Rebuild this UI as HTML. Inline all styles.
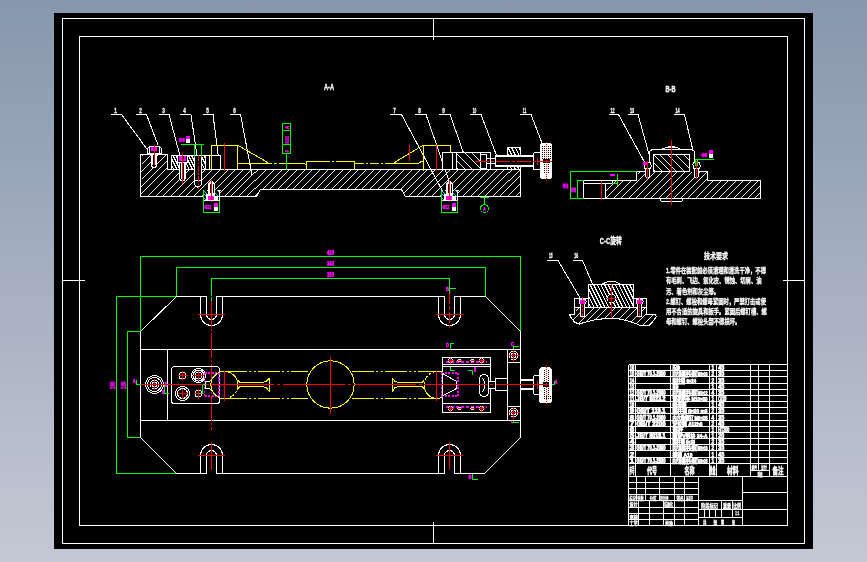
<!DOCTYPE html>
<html lang="zh"><head><meta charset="utf-8"><title>夹具装配图</title>
<style>html,body{margin:0;padding:0;overflow:hidden;background:#c4c8d4}body{width:867px;height:562px;background:linear-gradient(180deg,#8797ad 0%,#c4c8d4 100%)}svg{display:block;position:absolute;left:0;top:0;will-change:transform}text{font-family:"Liberation Sans","Noto Sans CJK SC",sans-serif;stroke:none}</style></head><body>
<svg width="867" height="562" viewBox="0 0 867 562" shape-rendering="crispEdges" fill="none" stroke-width="1">
<defs><pattern id="kn" width="2" height="2" patternUnits="userSpaceOnUse"><rect x="0" y="0" width="2" height="2" fill="#fff"/><rect x="0" y="0" width="1" height="1" fill="#000"/></pattern></defs>
<rect x="54" y="13" width="759" height="536" fill="#000"/>
<rect x="62.5" y="18.5" width="742" height="525" stroke="#fff" fill="none"/>
<rect x="79.5" y="36.5" width="708" height="489" stroke="#fff" fill="none"/>
<line x1="433.5" y1="18" x2="433.5" y2="40" stroke="#fff"/>
<line x1="433.5" y1="522" x2="433.5" y2="544" stroke="#fff"/>
<line x1="62" y1="280.5" x2="85" y2="280.5" stroke="#fff"/>
<line x1="783" y1="280.5" x2="805" y2="280.5" stroke="#fff"/>
<g id="secAA">
<text transform="translate(329 90) scale(0.6 1)" font-size="9.5" fill="#fff" text-anchor="middle" font-weight="bold" style="stroke:#fff;stroke-width:0.35">A-A</text>
<path d="M142.41 154.5L140.5 156.41M150.09 154.5L140.5 164.09M157.77 154.5L140.5 171.77M165.45 154.5L140.5 179.45M167.5 160.13L140.5 187.13M167.5 167.81L140.5 194.81M173.49 169.5L146.49 196.5M181.17 169.5L154.17 196.5M188.85 169.5L161.85 196.5M196.53 169.5L169.53 196.5M204.21 169.5L177.21 196.5M211.89 169.5L184.89 196.5M219.57 169.5L192.57 196.5M227.25 169.5L200.25 196.5M234.93 169.5L207.93 196.5M242.61 169.5L215.61 196.5M250.29 169.5L223.29 196.5M257.97 169.5L230.97 196.5M265.65 169.5L238.65 196.5M273.33 169.5L246.33 196.5M281.01 169.5L261.01 189.5M259.82 190.69L254.01 196.5M288.69 169.5L268.69 189.5M296.37 169.5L276.37 189.5M304.05 169.5L284.05 189.5M311.73 169.5L291.73 189.5M319.41 169.5L299.41 189.5M327.09 169.5L307.09 189.5M334.77 169.5L314.77 189.5M342.45 169.5L322.45 189.5M350.13 169.5L330.13 189.5M357.81 169.5L337.81 189.5M365.49 169.5L345.49 189.5M373.17 169.5L353.17 189.5M380.85 169.5L360.85 189.5M388.53 169.5L368.53 189.5M396.21 169.5L376.21 189.5M403.89 169.5L383.89 189.5M411.57 169.5L391.57 189.5M419.25 169.5L399.25 189.5M426.93 169.5L403.47 192.96M434.61 169.5L407.61 196.5M442.29 169.5L415.29 196.5M449.97 169.5L422.97 196.5M457.65 169.5L430.65 196.5M465.33 169.5L438.33 196.5M473.01 169.5L446.01 196.5M480.69 169.5L453.69 196.5M488.37 169.5L461.37 196.5M496.05 169.5L469.05 196.5M503.73 169.5L476.73 196.5M511.41 169.5L484.41 196.5M519.09 169.5L492.09 196.5M520.5 175.77L499.77 196.5M520.5 183.45L507.45 196.5M520.5 191.13L515.13 196.5" stroke="#fff" stroke-width="0.92"/>
<polygon points="140.5,154.5 167.5,154.5 167.5,169.5 520.5,169.5 520.5,196.5 405.5,196.5 401.5,189.5 260.5,189.5 256.5,196.5 140.5,196.5" stroke="#fff" fill="none"/>
<polyline points="111,114.5 121.5,114.5 148,150.5" stroke="#fff" fill="none"/>
<text transform="translate(115.5 112.5) scale(0.6 1)" font-size="7.6" fill="#fff" text-anchor="middle" font-weight="bold" style="stroke:#fff;stroke-width:0.35">1</text>
<polyline points="136,114.5 146.5,114.5 158,145" stroke="#fff" fill="none"/>
<text transform="translate(140.5 112.5) scale(0.6 1)" font-size="7.6" fill="#fff" text-anchor="middle" font-weight="bold" style="stroke:#fff;stroke-width:0.35">2</text>
<polyline points="159,114.5 169,114.5 181,159.5" stroke="#fff" fill="none"/>
<text transform="translate(163.5 112.5) scale(0.6 1)" font-size="7.6" fill="#fff" text-anchor="middle" font-weight="bold" style="stroke:#fff;stroke-width:0.35">3</text>
<polyline points="180,114.5 191,114.5 199,170" stroke="#fff" fill="none"/>
<text transform="translate(184.5 112.5) scale(0.6 1)" font-size="7.6" fill="#fff" text-anchor="middle" font-weight="bold" style="stroke:#fff;stroke-width:0.35">4</text>
<polyline points="203,114.5 213,114.5 219,162" stroke="#fff" fill="none"/>
<text transform="translate(207.5 112.5) scale(0.6 1)" font-size="7.6" fill="#fff" text-anchor="middle" font-weight="bold" style="stroke:#fff;stroke-width:0.35">5</text>
<polyline points="230,114.5 240.5,114.5 252,175" stroke="#fff" fill="none"/>
<text transform="translate(234.5 112.5) scale(0.6 1)" font-size="7.6" fill="#fff" text-anchor="middle" font-weight="bold" style="stroke:#fff;stroke-width:0.35">6</text>
<polyline points="390,114.5 401.5,114.5 443.5,193" stroke="#fff" fill="none"/>
<text transform="translate(394.5 112.5) scale(0.6 1)" font-size="7.6" fill="#fff" text-anchor="middle" font-weight="bold" style="stroke:#fff;stroke-width:0.35">7</text>
<polyline points="415,114.5 426,114.5 449.5,182" stroke="#fff" fill="none"/>
<text transform="translate(419.5 112.5) scale(0.6 1)" font-size="7.6" fill="#fff" text-anchor="middle" font-weight="bold" style="stroke:#fff;stroke-width:0.35">8</text>
<polyline points="439,114.5 450,114.5 465.5,158.5" stroke="#fff" fill="none"/>
<text transform="translate(443.5 112.5) scale(0.6 1)" font-size="7.6" fill="#fff" text-anchor="middle" font-weight="bold" style="stroke:#fff;stroke-width:0.35">9</text>
<polyline points="470,114.5 481,114.5 498,159.5" stroke="#fff" fill="none"/>
<text transform="translate(474.5 112.5) scale(0.42 1)" font-size="7.6" fill="#fff" text-anchor="middle" font-weight="bold" style="stroke:#fff;stroke-width:0.35">10</text>
<polyline points="520,114.5 531,114.5 542,143" stroke="#fff" fill="none"/>
<text transform="translate(524.5 112.5) scale(0.42 1)" font-size="7.6" fill="#fff" text-anchor="middle" font-weight="bold" style="stroke:#fff;stroke-width:0.35">11</text>
<polyline points="151.5,154.5 151.5,165.5 152.5,167.5 155.5,167.5 156.5,165.5 156.5,154.5" stroke="#fff" fill="#000"/>
<polygon points="147.5,153.5 147.5,148.5 149.5,146.5 159.5,146.5 161.5,148.5 161.5,153.5" stroke="#fff" fill="#000"/>
<line x1="149.5" y1="146.5" x2="149.5" y2="153.5" stroke="#fff"/>
<line x1="159.5" y1="146.5" x2="159.5" y2="153.5" stroke="#fff"/>
<rect x="149.5" y="153.5" width="10" height="1" stroke="#fff" fill="#000"/>
<line x1="152.5" y1="154.5" x2="152.5" y2="165" stroke="#fff"/>
<line x1="155.5" y1="154.5" x2="155.5" y2="165" stroke="#fff"/>
<rect x="151.5" y="147.5" width="5" height="3" stroke="#f0f" fill="#f0f"/>
<line x1="154.5" y1="145" x2="154.5" y2="164.5" stroke="#f00"/>
<path d="M171.5 164.9L173.8 169.5M171.5 158.7L176.9 169.5M173 155.5L180 169.5M176.1 155.5L183.1 169.5M179.2 155.5L186.2 169.5M182.3 155.5L189.3 169.5M185.4 155.5L192.4 169.5M188.5 155.5L195.5 169.5M191.6 155.5L198.6 169.5M194.7 155.5L201.7 169.5M197.8 155.5L204.8 169.5M200.9 155.5L205.5 164.7M204 155.5L205.5 158.5" stroke="#fff" stroke-width="1.16"/>
<rect x="171.5" y="155.5" width="34" height="14" stroke="#fff" fill="none"/>
<polygon points="177.5,155.5 177.5,162.5 179.5,162.5 179.5,178.5 181,180.5 184,180.5 185.5,178.5 185.5,162.5 187.5,162.5 187.5,155.5" stroke="#fff" fill="#000"/>
<line x1="181" y1="162.5" x2="181" y2="178.5" stroke="#fff"/>
<line x1="184" y1="162.5" x2="184" y2="178.5" stroke="#fff"/>
<line x1="179.5" y1="162.5" x2="185.5" y2="162.5" stroke="#fff"/>
<rect x="179.5" y="156.5" width="6" height="4" stroke="#f0f" fill="#f0f"/>
<rect x="182" y="156" width="1" height="2.5" stroke="#000" fill="#000"/>
<line x1="182.5" y1="152.5" x2="182.5" y2="183.5" stroke="#f00"/>
<polygon points="194.5,155.5 194.5,184.5 198,187.5 201.5,184.5 201.5,155.5" stroke="#fff" fill="#000"/>
<line x1="194.5" y1="180.5" x2="201.5" y2="180.5" stroke="#fff"/>
<line x1="198.5" y1="155" x2="198.5" y2="189" stroke="#f00" stroke-dasharray="6 1.5 1.5 1.5"/>
<line x1="180.5" y1="144.5" x2="204" y2="144.5" stroke="#0f0"/>
<line x1="194.5" y1="144.5" x2="194.5" y2="157" stroke="#0f0"/>
<line x1="201.5" y1="144.5" x2="201.5" y2="157" stroke="#0f0"/>
<text transform="translate(179 141.5) scale(0.7 1)" font-size="6" fill="#f0f" font-weight="bold" style="stroke:#f0f;stroke-width:0.6">Φ6</text>
<rect x="186.5" y="136.5" width="2.5" height="3" stroke="#f0f" fill="#f0f"/>
<rect x="186.5" y="139.5" width="2.5" height="3" stroke="#fff" fill="#fff"/>
<rect x="205.5" y="155.5" width="15" height="14" stroke="#fff" fill="#000"/>
<line x1="209.5" y1="155.5" x2="209.5" y2="169.5" stroke="#fff"/>
<polyline points="211.5,169.5 211.5,145.5 237.5,145.5 237.5,169.5" stroke="#ff0" fill="none"/>
<polyline points="237.5,145.5 240,146.5 266,161.5 268.5,163.5" stroke="#ff0" fill="none"/>
<line x1="237.5" y1="163.5" x2="272" y2="163.5" stroke="#ff0"/>
<line x1="274" y1="163.5" x2="304" y2="163.5" stroke="#ff0" stroke-dasharray="3 2 30 2"/>
<polyline points="304,163.5 305.5,164.5 306.5,164.5" stroke="#ff0" fill="none"/>
<polyline points="306.5,169.5 306.5,161.5 324,161.5" stroke="#ff0" fill="none"/>
<line x1="324" y1="161.5" x2="338" y2="161.5" stroke="#ff0" stroke-dasharray="6 2 2 2"/>
<polyline points="338,161.5 354.5,161.5 354.5,169.5" stroke="#ff0" fill="none"/>
<line x1="354.5" y1="163.5" x2="394" y2="163.5" stroke="#ff0" stroke-dasharray="9 2 2 2"/>
<polyline points="394,163.5 396,161.5 422.5,145.5 450.5,145.5 450.5,169.5" stroke="#ff0" fill="none"/>
<polyline points="423.5,145.5 423.5,170.5" stroke="#ff0" fill="none"/>
<polyline points="394,163.5 418.5,163.5 421,161.5 423.5,161.5" stroke="#ff0" fill="none"/>
<line x1="224.5" y1="143" x2="224.5" y2="171" stroke="#f00"/>
<line x1="409.5" y1="145" x2="409.5" y2="161" stroke="#f00"/>
<line x1="436.5" y1="145" x2="436.5" y2="171" stroke="#f00"/>
<rect x="282.5" y="123.5" width="8" height="30" stroke="#0f0" fill="none"/>
<line x1="282.5" y1="130.5" x2="290.5" y2="130.5" stroke="#0f0"/>
<line x1="282.5" y1="144.5" x2="290.5" y2="144.5" stroke="#0f0"/>
<line x1="286.5" y1="153.5" x2="286.5" y2="169.5" stroke="#0f0"/>
<g transform="translate(288.6 152.5) rotate(-90)">
<text transform="translate(0 0) scale(0.8 1)" font-size="5" fill="#f0f" font-weight="bold" style="stroke:#f0f;stroke-width:0.35">//</text>
<text transform="translate(9 0) scale(0.75 1)" font-size="5" fill="#f0f" font-weight="bold" style="stroke:#f0f;stroke-width:0.35">0.02</text>
<text transform="translate(23.5 0) scale(0.7 1)" font-size="6" fill="#f0f" font-weight="bold" style="stroke:#f0f;stroke-width:0.6">A</text>
</g>
<rect x="203.5" y="190.5" width="16" height="10" stroke="none" fill="#000"/>
<path d="M203.5 197.9L206.1 200.5M203.5 193.7L210.3 200.5M204.5 190.5L214.5 200.5M208.7 190.5L218.7 200.5M212.9 190.5L219.5 197.1M217.1 190.5L219.5 192.9" stroke="#0ff" stroke-width="0.92"/>
<polygon points="208.5,199.5 208.5,183.5 211.5,180.5 214.5,183.5 214.5,199.5" stroke="#fff" fill="#fff"/>
<line x1="210" y1="184" x2="210" y2="193" stroke="#000"/>
<line x1="213" y1="184" x2="213" y2="193" stroke="#000"/>
<rect x="206" y="194.5" width="2.5" height="5" stroke="#fff" fill="#fff"/>
<rect x="214.5" y="196.5" width="2.5" height="3" stroke="#fff" fill="#fff"/>
<rect x="208.5" y="196.5" width="5" height="3" stroke="#f0f" fill="#f0f"/>
<line x1="211.5" y1="180" x2="211.5" y2="202" stroke="#f00"/>
<polyline points="203.5,190 203.5,212.5 219.5,212.5 219.5,200.5" stroke="#0f0" fill="none"/>
<line x1="203.5" y1="200.5" x2="219.5" y2="200.5" stroke="#fff"/>
<polyline points="217.5,190.5 220.5,190.5" stroke="#fff" fill="none"/>
<line x1="219.5" y1="190.5" x2="219.5" y2="200.5" stroke="#fff"/>
<text transform="translate(204.5 209) scale(0.62 1)" font-size="5.5" fill="#f0f" font-weight="bold" style="stroke:#f0f;stroke-width:0.5">Φ12</text>
<rect x="214" y="203.5" width="3" height="4" stroke="#f0f" fill="#f0f"/>
<rect x="214" y="207.5" width="3" height="3" stroke="#fff" fill="#fff"/>
<rect x="441.5" y="190.5" width="16" height="10" stroke="none" fill="#000"/>
<path d="M441.5 197.9L444.1 200.5M441.5 193.7L448.3 200.5M442.5 190.5L452.5 200.5M446.7 190.5L456.7 200.5M450.9 190.5L457.5 197.1M455.1 190.5L457.5 192.9" stroke="#0ff" stroke-width="0.92"/>
<polygon points="446.5,199.5 446.5,183.5 449.5,180.5 452.5,183.5 452.5,199.5" stroke="#fff" fill="#fff"/>
<line x1="448" y1="184" x2="448" y2="193" stroke="#000"/>
<line x1="451" y1="184" x2="451" y2="193" stroke="#000"/>
<rect x="444" y="194.5" width="2.5" height="5" stroke="#fff" fill="#fff"/>
<rect x="452.5" y="196.5" width="2.5" height="3" stroke="#fff" fill="#fff"/>
<rect x="446.5" y="196.5" width="5" height="3" stroke="#f0f" fill="#f0f"/>
<line x1="449.5" y1="180" x2="449.5" y2="202" stroke="#f00"/>
<polyline points="441.5,190 441.5,212.5 457.5,212.5 457.5,200.5" stroke="#0f0" fill="none"/>
<line x1="441.5" y1="200.5" x2="457.5" y2="200.5" stroke="#fff"/>
<polyline points="455.5,190.5 458.5,190.5" stroke="#fff" fill="none"/>
<line x1="457.5" y1="190.5" x2="457.5" y2="200.5" stroke="#fff"/>
<text transform="translate(442.5 209) scale(0.62 1)" font-size="5.5" fill="#f0f" font-weight="bold" style="stroke:#f0f;stroke-width:0.5">Φ12</text>
<rect x="452" y="203.5" width="3" height="4" stroke="#f0f" fill="#f0f"/>
<rect x="452" y="207.5" width="3" height="3" stroke="#fff" fill="#fff"/>
<rect x="442.5" y="152.5" width="48" height="17" stroke="#fff" fill="#000"/>
<line x1="452.5" y1="152.5" x2="452.5" y2="169.5" stroke="#fff"/>
<line x1="456.5" y1="152.5" x2="456.5" y2="169.5" stroke="#fff"/>
<path d="M456.5 167.86L458.14 169.5M456.5 160.18L465.82 169.5M456.5 152.5L473.5 169.5M464.18 152.5L480.5 168.82M471.86 152.5L480.5 161.14M479.54 152.5L480.5 153.46" stroke="#fff" stroke-width="0.92"/>
<rect x="456.5" y="152.5" width="24" height="17" stroke="#fff" fill="none"/>
<rect x="480.5" y="154.5" width="6" height="14" stroke="#fff" fill="#000"/>
<rect x="495.5" y="155.5" width="38" height="11" stroke="#fff" fill="#000"/>
<line x1="495.5" y1="156.5" x2="533.5" y2="156.5" stroke="#fff"/>
<line x1="495.5" y1="165.5" x2="533.5" y2="165.5" stroke="#fff"/>
<rect x="486.5" y="158.5" width="9" height="5" stroke="#fff" fill="#000"/>
<line x1="490.5" y1="152.5" x2="490.5" y2="169.5" stroke="#fff"/>
<path d="M507.5 153.7L508.4 155.5M508 147.5L512 155.5M511.6 147.5L515.6 155.5M515.2 147.5L519.2 155.5M518.8 147.5L520.5 150.9" stroke="#fff" stroke-width="1.16"/>
<rect x="507.5" y="147.5" width="13" height="8" stroke="#fff" fill="none"/>
<path d="M507.5 168.1L508.2 169.5M510.3 166.5L511.8 169.5M513.9 166.5L515.4 169.5M517.5 166.5L519 169.5" stroke="#fff" stroke-width="1.16"/>
<rect x="507.5" y="166.5" width="13" height="3" stroke="#fff" fill="none"/>
<rect x="533.5" y="152.5" width="7" height="17" stroke="#fff" fill="#000" rx="1.5"/>
<rect x="540.5" y="143.5" width="11" height="35" stroke="#fff" fill="#fff" rx="2.5"/>
<rect x="542" y="146" width="4" height="13" fill="url(#kn)"/>
<rect x="548" y="146" width="3" height="13" fill="url(#kn)"/>
<rect x="544" y="164" width="2" height="10" fill="url(#kn)"/>
<rect x="548" y="164" width="2" height="10" fill="url(#kn)"/>
<rect x="543" y="159" width="7" height="4" fill="#000"/>
<line x1="474.5" y1="161.5" x2="553" y2="161.5" stroke="#f00" stroke-dasharray="14 2 3 2"/>
<line x1="546.5" y1="141.5" x2="546.5" y2="181" stroke="#f00" stroke-dasharray="1 1"/>
<line x1="537.5" y1="157.5" x2="537.5" y2="165" stroke="#f00"/>
<line x1="480" y1="197.5" x2="489" y2="197.5" stroke="#0f0"/>
<line x1="484.5" y1="197.5" x2="484.5" y2="204.5" stroke="#0f0"/>
<circle cx="484.5" cy="208.5" r="4" stroke="#0f0" fill="none"/>
<text transform="translate(484.5 210.5) scale(0.8 1)" font-size="5" fill="#f0f" text-anchor="middle" font-weight="bold" style="stroke:#f0f;stroke-width:0.35">A</text>
</g>
<g id="secBB">
<text transform="translate(670.5 92) scale(0.6 1)" font-size="9.5" fill="#fff" text-anchor="middle" font-weight="bold" style="stroke:#fff;stroke-width:0.35">B-B</text>
<polyline points="608.5,114.5 618.5,114.5 645,163" stroke="#fff" fill="none"/>
<text transform="translate(612.5 112.5) scale(0.5 1)" font-size="7.6" fill="#fff" text-anchor="middle" font-weight="bold" style="stroke:#fff;stroke-width:0.35">12</text>
<polyline points="627.5,114.5 638,114.5 649.5,156" stroke="#fff" fill="none"/>
<text transform="translate(632 112.5) scale(0.5 1)" font-size="7.6" fill="#fff" text-anchor="middle" font-weight="bold" style="stroke:#fff;stroke-width:0.35">13</text>
<polyline points="673.5,114.5 684.5,114.5 694,155" stroke="#fff" fill="none"/>
<text transform="translate(677.5 112.5) scale(0.5 1)" font-size="7.6" fill="#fff" text-anchor="middle" font-weight="bold" style="stroke:#fff;stroke-width:0.35">14</text>
<path d="M585.23 180.5L583.5 182.23M592.74 180.5L583.5 189.74M600.25 180.5L583.5 197.25M607.76 180.5L589.76 198.5M615.27 180.5L597.27 198.5M622.78 180.5L604.78 198.5M639.29 171.5L636.5 174.29M630.29 180.5L612.29 198.5M646.8 171.5L619.8 198.5M654.31 171.5L627.31 198.5M661.82 171.5L634.82 198.5M669.33 171.5L642.33 198.5M676.84 171.5L649.84 198.5M684.35 171.5L657.35 198.5M691.86 171.5L664.86 198.5M699.37 171.5L672.37 198.5M706.88 171.5L679.88 198.5M707.5 178.39L687.39 198.5M712.9 180.5L694.9 198.5M720.41 180.5L702.41 198.5M727.92 180.5L709.92 198.5M735.43 180.5L717.43 198.5M742.94 180.5L724.94 198.5M750.45 180.5L732.45 198.5M757.96 180.5L739.96 198.5M760.5 185.47L747.47 198.5M760.5 192.98L754.98 198.5" stroke="#fff" stroke-width="0.92"/>
<polygon points="583.5,180.5 636.5,180.5 636.5,171.5 707.5,171.5 707.5,180.5 760.5,180.5 760.5,198.5 583.5,198.5" stroke="#fff" fill="none"/>
<rect x="583.5" y="180.5" width="29" height="3" stroke="#fff" fill="#000"/>
<rect x="583.5" y="183.5" width="22" height="15" stroke="#fff" fill="#000"/>
<line x1="601.5" y1="180.5" x2="601.5" y2="198.5" stroke="#f00"/>
<polyline points="660.5,198.5 660.5,200.5 662,201.5 681,201.5 682.5,200.5 682.5,198.5" stroke="#fff" fill="none"/>
<polyline points="649.5,171.5 649.5,151.5 652,149.5 691.5,149.5 694.5,151.5 694.5,171.5" stroke="#fff" fill="#000"/>
<path d="M653.5 169.8L655.2 171.5M653.5 162.3L662.7 171.5M653.5 154.8L670.2 171.5M660.7 154.5L677.7 171.5M668.2 154.5L685.2 171.5M675.7 154.5L689.5 168.3M683.2 154.5L689.5 160.8" stroke="#fff" stroke-width="0.92"/>
<rect x="653.5" y="154.5" width="36" height="17" stroke="#fff" fill="none"/>
<path d="M661.5 149.5 Q671.5 143.5 681.5 149.5" stroke="#fff" fill="none"/>
<line x1="665" y1="147.5" x2="678" y2="147.5" stroke="#fff"/>
<polygon points="645.5,165.5 645.5,176.5 647.5,178.5 649.5,176.5 649.5,165.5" stroke="#fff" fill="#000"/>
<rect x="644" y="162.5" width="7" height="6" stroke="#fff" fill="#000" rx="2"/>
<line x1="647.5" y1="161" x2="647.5" y2="178.5" stroke="#f00"/>
<polygon points="694.5,165.5 694.5,176.5 696.5,178.5 698.5,176.5 698.5,165.5" stroke="#fff" fill="#000"/>
<rect x="693" y="162.5" width="7" height="6" stroke="#fff" fill="#000" rx="2"/>
<line x1="696.5" y1="161" x2="696.5" y2="178.5" stroke="#f00"/>
<rect x="643.5" y="162.5" width="3" height="2" stroke="#f0f" fill="#f0f"/>
<line x1="671.5" y1="140" x2="671.5" y2="205" stroke="#f00"/>
<polyline points="636.5,171.5 570.5,171.5 570.5,198.5 583.5,198.5" stroke="#0f0" fill="none"/>
<polyline points="583.5,180.5 577.5,180.5 577.5,198.5" stroke="#0f0" fill="none"/>
<line x1="612" y1="183.5" x2="617.5" y2="183.5" stroke="#0f0"/>
<line x1="617.5" y1="174" x2="617.5" y2="185.5" stroke="#0f0"/>
<rect x="610.5" y="174.5" width="4" height="1" stroke="#f0f" fill="#f0f"/>
<g transform="translate(568 188.5) rotate(-90)">
<text transform="translate(0 0) scale(0.65 1)" font-size="7" fill="#f0f" font-weight="bold" style="stroke:#f0f;stroke-width:0.6">25</text>
</g>
<g transform="translate(576 192.5) rotate(-90)">
<text transform="translate(0 0) scale(0.65 1)" font-size="7" fill="#f0f" font-weight="bold" style="stroke:#f0f;stroke-width:0.6">18</text>
</g>
<line x1="694.5" y1="159.5" x2="714" y2="159.5" stroke="#0f0"/>
<line x1="695.5" y1="159.5" x2="695.5" y2="166" stroke="#0f0"/>
<line x1="697.5" y1="159.5" x2="697.5" y2="166" stroke="#0f0"/>
<text transform="translate(701.5 156.5) scale(0.7 1)" font-size="6" fill="#f0f" font-weight="bold" style="stroke:#f0f;stroke-width:0.6">Φ6</text>
<rect x="709.5" y="150.5" width="3" height="4" stroke="#f0f" fill="#f0f"/>
<rect x="709.5" y="154.5" width="3" height="3" stroke="#fff" fill="#fff"/>
</g>
<g id="secCC">
<text transform="translate(610.8 244) scale(0.66 1)" font-size="8.8" fill="#fff" text-anchor="middle" font-weight="bold" style="stroke:#fff;stroke-width:0.35">C-C旋转</text>
<polyline points="546.5,260.5 558,260.5 581,299.5" stroke="#fff" fill="none"/>
<text transform="translate(550.8 258) scale(0.45 1)" font-size="7" fill="#fff" text-anchor="middle" font-weight="bold" style="stroke:#fff;stroke-width:0.35">15</text>
<polyline points="572.5,260.5 582.5,260.5 592.5,284" stroke="#fff" fill="none"/>
<text transform="translate(576.2 258) scale(0.5 1)" font-size="7" fill="#fff" text-anchor="middle" font-weight="bold" style="stroke:#fff;stroke-width:0.35">16</text>
<path d="M578 307.5L574.5 311M571 314.5L569.99 315.51M585.5 307.5L572.88 320.12M593 307.5L577.25 323.25M600.5 307.5L586.05 321.95M608 307.5L595.71 319.79M615.5 307.5L604.23 318.77M623 307.5L611.97 318.53M630.5 307.5L618.96 319.04M638 307.5L625.3 320.2M645.5 307.5L631.12 321.88M646.5 314L636.56 323.94M653.13 314.87L643 325" stroke="#fff" stroke-width="0.92"/>
<polygon points="574.5,307.5 646.5,307.5 646.5,314.5 655.5,315 656.5,316.5 655.47,317.99 654.39,319.44 653.25,320.88 652.06,322.28 650.81,323.65 649.5,325 639,325 635.5,323.48 632,322.16 628.5,321.04 625,320.12 621.5,319.41 618,318.91 614.5,318.6 611,318.5 607.01,318.59 603.03,318.84 599.07,319.27 595.12,319.88 591.2,320.65 587.28,321.59 583.38,322.71 579.5,324 575,322.5 573.88,321.31 572.83,320.06 571.88,318.75 571,317.39 570.21,315.97 569.5,314.5 574.5,314.5" stroke="#fff" fill="none"/>
<rect x="574.5" y="298.5" width="14" height="9" stroke="#fff" fill="#000"/>
<rect x="633.5" y="298.5" width="13" height="9" stroke="#fff" fill="#000"/>
<path d="M588.5 303.1L590.7 307.5M588.5 295.9L594.3 307.5M588.5 288.7L597.9 307.5M590 284.5L601.5 307.5M593.6 284.5L605.1 307.5M597.2 284.5L608.7 307.5M600.8 284.5L612.3 307.5M604.4 284.5L615.9 307.5M608 284.5L619.5 307.5M611.6 284.5L623.1 307.5M615.2 284.5L626.7 307.5M618.8 284.5L630.3 307.5M622.4 284.5L633.5 306.7M626 284.5L633.5 299.5M629.6 284.5L633.5 292.3M633.2 284.5L633.5 285.1" stroke="#fff" stroke-width="1.16"/>
<rect x="588.5" y="284.5" width="45" height="23" stroke="#fff" fill="none"/>
<circle cx="611.5" cy="298.5" r="4.5" stroke="#fff" fill="#000"/>
<path d="M601.5 284.5 Q611.5 278 620.5 284.5" stroke="#fff" fill="none"/>
<line x1="611.5" y1="284" x2="611.5" y2="316.5" stroke="#f00"/>
<line x1="607" y1="298.5" x2="616.5" y2="298.5" stroke="#f00"/>
<polyline points="580.5,303.5 580.5,316.5 584.5,316.5 584.5,303.5" stroke="#fff" fill="#000"/>
<rect x="579" y="299.5" width="7" height="4" stroke="#fff" fill="#000" rx="1.5"/>
<rect x="580.5" y="300" width="4" height="3" stroke="#f0f" fill="#f0f"/>
<line x1="582.5" y1="297" x2="582.5" y2="318" stroke="#f00" stroke-dasharray="3 1"/>
<polyline points="637.5,303.5 637.5,316.5 641.5,316.5 641.5,303.5" stroke="#fff" fill="#000"/>
<rect x="636" y="299.5" width="7" height="4" stroke="#fff" fill="#000" rx="1.5"/>
<rect x="637.5" y="300" width="4" height="3" stroke="#f0f" fill="#f0f"/>
<line x1="639.5" y1="297" x2="639.5" y2="318" stroke="#f00" stroke-dasharray="3 1"/>
</g>
<g id="tech">
<text transform="translate(716 258.5) scale(0.75 1)" font-size="8" fill="#fff" text-anchor="middle" font-weight="bold" style="stroke:#fff;stroke-width:0.35">技术要求</text>
<text transform="translate(666 273.2) scale(0.76 1)" font-size="7" fill="#fff" font-weight="bold" style="stroke:#fff;stroke-width:0.3">1.零件在装配前必须清理和清洗干净，不得</text>
<text transform="translate(666 283.4) scale(0.76 1)" font-size="7" fill="#fff" font-weight="bold" style="stroke:#fff;stroke-width:0.3">有毛刺、飞边、氧化皮、锈蚀、切屑、油</text>
<text transform="translate(666 293.6) scale(0.76 1)" font-size="7" fill="#fff" font-weight="bold" style="stroke:#fff;stroke-width:0.3">污、着色剂和灰尘等。</text>
<text transform="translate(666 304) scale(0.76 1)" font-size="7" fill="#fff" font-weight="bold" style="stroke:#fff;stroke-width:0.3">2.螺钉、螺栓和螺母紧固时，严禁打击或使</text>
<text transform="translate(666 314) scale(0.76 1)" font-size="7" fill="#fff" font-weight="bold" style="stroke:#fff;stroke-width:0.3">用不合适的旋具和扳手。紧固后螺钉槽、螺</text>
<text transform="translate(666 324) scale(0.76 1)" font-size="7" fill="#fff" font-weight="bold" style="stroke:#fff;stroke-width:0.3">母和螺钉、螺栓头部不得损坏。</text>
</g>
<g id="plan">
<polyline points="140.5,331.5 140.5,256.5 520.5,256.5 520.5,331.5" stroke="#0f0" fill="none"/>
<polyline points="176.5,296.5 176.5,267.5 485.5,267.5 485.5,296.5" stroke="#0f0" fill="none"/>
<polyline points="211.5,301 211.5,278.5 449.5,278.5 449.5,293" stroke="#0f0" fill="none"/>
<polyline points="176.5,296.5 116.5,296.5 116.5,473.5 176.5,473.5" stroke="#0f0" fill="none"/>
<polyline points="140.5,331.5 127.5,331.5 127.5,437.5 140.5,437.5" stroke="#0f0" fill="none"/>
<text transform="translate(330.5 255) scale(0.6 1)" font-size="7" fill="#f0f" text-anchor="middle" font-weight="bold" style="stroke:#f0f;stroke-width:0.6">420</text>
<text transform="translate(330.5 266) scale(0.6 1)" font-size="7" fill="#f0f" text-anchor="middle" font-weight="bold" style="stroke:#f0f;stroke-width:0.6">340</text>
<text transform="translate(330.5 277) scale(0.6 1)" font-size="7" fill="#f0f" text-anchor="middle" font-weight="bold" style="stroke:#f0f;stroke-width:0.6">260</text>
<g transform="translate(114.8 389) rotate(-90)">
<text transform="translate(0 0) scale(0.55 1)" font-size="8" fill="#f0f" font-weight="bold" style="stroke:#f0f;stroke-width:0.6">190</text>
</g>
<g transform="translate(126 389) rotate(-90)">
<text transform="translate(0 0) scale(0.55 1)" font-size="8" fill="#f0f" font-weight="bold" style="stroke:#f0f;stroke-width:0.6">120</text>
</g>
<polygon points="176.5,296.5 485.5,296.5 520.5,331.5 520.5,437.5 484.5,473.5 176.5,473.5 140.5,437.5 140.5,331.5" stroke="#fff" fill="none"/>
<line x1="140.5" y1="349.5" x2="520.5" y2="349.5" stroke="#fff"/>
<line x1="140.5" y1="420.5" x2="520.5" y2="420.5" stroke="#fff"/>
<line x1="167.5" y1="349.5" x2="167.5" y2="420.5" stroke="#fff"/>
<path d="M200.5 296.5 L200.5 314.5 A11 11 0 0 0 222.5 314.5 L222.5 296.5" stroke="#fff" fill="none"/>
<path d="M206.5 296.5 L206.5 314.5 A5 5 0 0 0 216.5 314.5 L216.5 296.5" stroke="#fff" fill="none"/>
<line x1="198" y1="314.5" x2="225" y2="314.5" stroke="#f00"/>
<path d="M200.5 473.5 L200.5 455.5 A11 11 0 0 1 222.5 455.5 L222.5 473.5" stroke="#fff" fill="none"/>
<path d="M206.5 473.5 L206.5 455.5 A5 5 0 0 1 216.5 455.5 L216.5 473.5" stroke="#fff" fill="none"/>
<line x1="198" y1="455.5" x2="225" y2="455.5" stroke="#f00"/>
<line x1="207" y1="296.5" x2="216" y2="296.5" stroke="#000"/>
<line x1="207" y1="473.5" x2="216" y2="473.5" stroke="#000"/>
<path d="M438.5 296.5 L438.5 314.5 A11 11 0 0 0 460.5 314.5 L460.5 296.5" stroke="#fff" fill="none"/>
<path d="M444.5 296.5 L444.5 314.5 A5 5 0 0 0 454.5 314.5 L454.5 296.5" stroke="#fff" fill="none"/>
<line x1="436" y1="314.5" x2="463" y2="314.5" stroke="#f00"/>
<path d="M438.5 473.5 L438.5 455.5 A11 11 0 0 1 460.5 455.5 L460.5 473.5" stroke="#fff" fill="none"/>
<path d="M444.5 473.5 L444.5 455.5 A5 5 0 0 1 454.5 455.5 L454.5 473.5" stroke="#fff" fill="none"/>
<line x1="436" y1="455.5" x2="463" y2="455.5" stroke="#f00"/>
<line x1="445" y1="296.5" x2="454" y2="296.5" stroke="#000"/>
<line x1="445" y1="473.5" x2="454" y2="473.5" stroke="#000"/>
<line x1="211.5" y1="301" x2="211.5" y2="430" stroke="#f00" stroke-dasharray="25.5 2 2 2"/>
<line x1="211.5" y1="442" x2="211.5" y2="470" stroke="#f00"/>
<line x1="449.5" y1="293" x2="449.5" y2="327.5" stroke="#f00" stroke-dasharray="11 2 4 2"/>
<line x1="449.5" y1="442" x2="449.5" y2="470" stroke="#f00"/>
<text transform="translate(446 291) scale(0.7 1)" font-size="6" fill="#f0f" font-weight="bold" style="stroke:#f0f;stroke-width:0.6">B</text>
<line x1="449.5" y1="288.5" x2="456" y2="288.5" stroke="#0f0"/>
<text transform="translate(446 346.5) scale(0.7 1)" font-size="6" fill="#f0f" font-weight="bold" style="stroke:#f0f;stroke-width:0.6">D</text>
<polyline points="454,343.5 450.5,343.5 450.5,350" stroke="#0f0" fill="none"/>
<text transform="translate(511 346) scale(0.7 1)" font-size="6" fill="#f0f" font-weight="bold" style="stroke:#f0f;stroke-width:0.6">C</text>
<polyline points="519,346.5 513.5,346.5 513.5,350.5" stroke="#0f0" fill="none"/>
<text transform="translate(511 422.5) scale(0.7 1)" font-size="6" fill="#f0f" font-weight="bold" style="stroke:#f0f;stroke-width:0.6">C</text>
<polyline points="513.5,418 513.5,422.5 519,422.5" stroke="#0f0" fill="none"/>
<text transform="translate(468.5 479) scale(0.7 1)" font-size="6" fill="#f0f" font-weight="bold" style="stroke:#f0f;stroke-width:0.6">B</text>
<polyline points="472.5,474 472.5,479.5 478,479.5" stroke="#0f0" fill="none"/>
<text transform="translate(554.5 383.5) scale(0.7 1)" font-size="6" fill="#f0f" font-weight="bold" style="stroke:#f0f;stroke-width:0.6">A</text>
<polyline points="550,384.5 554.5,384.5 554.5,380.5" stroke="#0f0" fill="none"/>
<text transform="translate(132.8 382.8) scale(0.7 1)" font-size="6" fill="#f0f" font-weight="bold" style="stroke:#f0f;stroke-width:0.6">A</text>
<polyline points="136.5,380 136.5,384.5 141,384.5" stroke="#0f0" fill="none"/>
<circle cx="154.5" cy="384.5" r="9" stroke="#fff" fill="none"/>
<circle cx="154.5" cy="384.5" r="7" stroke="#fff" fill="none"/>
<circle cx="154.5" cy="384.5" r="4.5" stroke="#fff" fill="none"/>
<circle cx="154.5" cy="384.5" r="2.5" stroke="#fff" fill="none"/>
<line x1="149" y1="384.5" x2="160" y2="384.5" stroke="#f00"/>
<line x1="154.5" y1="379" x2="154.5" y2="390" stroke="#f00"/>
<polyline points="161.5,384.5 164.5,384.5 164.5,393.5 169,393.5" stroke="#0f0" fill="none"/>
<rect x="162" y="390.5" width="1" height="3" stroke="#f0f" fill="#f0f"/>
<rect x="165.5" y="382.5" width="1" height="4" stroke="#f0f" fill="#f0f"/>
<rect x="171.5" y="366.5" width="48" height="37" stroke="#fff" fill="none" rx="3"/>
<circle cx="182.5" cy="375.5" r="3.5" stroke="#fff" fill="none"/>
<line x1="177.5" y1="375.5" x2="188" y2="375.5" stroke="#f00"/>
<line x1="182.5" y1="370.5" x2="182.5" y2="381" stroke="#f00"/>
<circle cx="198.5" cy="375.5" r="7" stroke="#fff" fill="none"/>
<circle cx="198.5" cy="375.5" r="5.5" stroke="#fff" fill="none"/>
<circle cx="198.5" cy="375.5" r="3.5" stroke="#fff" fill="none"/>
<line x1="193.5" y1="375.5" x2="204" y2="375.5" stroke="#f00"/>
<line x1="198.5" y1="370.5" x2="198.5" y2="381" stroke="#f00"/>
<circle cx="182.5" cy="393.5" r="7" stroke="#fff" fill="none"/>
<circle cx="182.5" cy="393.5" r="5" stroke="#fff" fill="none"/>
<line x1="177.5" y1="393.5" x2="188" y2="393.5" stroke="#f00"/>
<line x1="182.5" y1="388.5" x2="182.5" y2="399" stroke="#f00"/>
<circle cx="198.5" cy="393.5" r="3.5" stroke="#fff" fill="none"/>
<line x1="193.5" y1="393.5" x2="204" y2="393.5" stroke="#f00"/>
<line x1="198.5" y1="388.5" x2="198.5" y2="399" stroke="#f00"/>
<line x1="204.5" y1="373" x2="220" y2="373" stroke="#f0f" stroke-dasharray="2 1.5" stroke-width="2"/>
<line x1="204.5" y1="395.5" x2="220" y2="395.5" stroke="#f0f" stroke-dasharray="2 1.5" stroke-width="2"/>
<line x1="218.5" y1="373" x2="218.5" y2="396" stroke="#f0f" stroke-dasharray="2 1.5" stroke-width="2"/>
<line x1="204.5" y1="373" x2="204.5" y2="396" stroke="#f0f" stroke-dasharray="2 1.5"/>
<polyline points="219.5,371.5 209.5,381.5 205.5,381.5 205.5,388.5 209.5,388.5 219.5,398.5" stroke="#fff" fill="none"/>
<polyline points="206.5,384.5 202.5,384.5 202.5,393.5 198.5,393.5" stroke="#0f0" fill="none"/>
<line x1="220" y1="371.5" x2="308" y2="371.5" stroke="#ff0" stroke-dasharray="26.5 2.5 2 2.5 2 2.2 22 2.5 2 2.5 2 2.2"/>
<line x1="220" y1="398.5" x2="308" y2="398.5" stroke="#ff0" stroke-dasharray="26.5 2.5 2 2.5 2 2.2 22 2.5 2 2.5 2 2.2"/>
<line x1="351.5" y1="371.5" x2="437.5" y2="371.5" stroke="#ff0" stroke-dasharray="22 2.5 2 2.5 2 2.2"/>
<line x1="351.5" y1="398.5" x2="437.5" y2="398.5" stroke="#ff0" stroke-dasharray="22 2.5 2 2.5 2 2.2"/>
<path d="M219.5 372 A13.7 13.7 0 0 0 219.5 397.5" stroke="#ff0" fill="none"/>
<path d="M224.5 371.5 A13.5 13.5 0 0 1 238 384.5" stroke="#ff0" fill="none"/>
<path d="M238 384.5 A13.5 13.5 0 0 1 224.5 398.5" stroke="#ff0" fill="none" stroke-dasharray="5 2 2 2"/>
<path d="M437.5 371.5 A13.5 13.5 0 0 0 424 384.5" stroke="#ff0" fill="none" stroke-dasharray="5 2 2 2"/>
<path d="M424 384.5 A13.5 13.5 0 0 0 437.5 398.5" stroke="#ff0" fill="none"/>
<path d="M437.5 371.5 A13.5 13.5 0 0 1 442.5 372" stroke="#ff0" fill="none"/>
<path d="M437.5 398.5 A13.5 13.5 0 0 0 442.5 397" stroke="#ff0" fill="none"/>
<circle cx="330.5" cy="384.5" r="23.7" stroke="#ff0" fill="#000"/>
<line x1="330.5" y1="357" x2="330.5" y2="414" stroke="#f00"/>
<polyline points="238,380.5 240,382.5 262,382.5 266,381.5 269.5,378" stroke="#ff0" fill="none"/>
<polyline points="238,388.5 240,386.5 262,386.5 266,387.5 269.5,391.5" stroke="#ff0" fill="none"/>
<line x1="269.5" y1="378" x2="269.5" y2="392" stroke="#ff0"/>
<polyline points="424,380.5 422,382.5 399,382.5 395,381.5 392.5,378" stroke="#ff0" fill="none"/>
<polyline points="424,388.5 422,386.5 399,386.5 395,387.5 392.5,391.5" stroke="#ff0" fill="none"/>
<line x1="392.5" y1="378" x2="392.5" y2="392" stroke="#ff0"/>
<line x1="224.5" y1="370.5" x2="224.5" y2="400.5" stroke="#f00"/>
<line x1="436.5" y1="370.5" x2="436.5" y2="400.5" stroke="#f00"/>
<rect x="442.5" y="357.5" width="48" height="55" stroke="#fff" fill="#000"/>
<line x1="442.5" y1="364.5" x2="490.5" y2="364.5" stroke="#fff"/>
<line x1="442.5" y1="366.5" x2="490.5" y2="366.5" stroke="#fff"/>
<line x1="442.5" y1="403.5" x2="490.5" y2="403.5" stroke="#fff"/>
<line x1="446" y1="362" x2="487" y2="362" stroke="#f0f" stroke-dasharray="3 2" stroke-width="2"/>
<line x1="446" y1="406.5" x2="487" y2="406.5" stroke="#f0f" stroke-dasharray="3 2" stroke-width="2"/>
<circle cx="450.5" cy="360.5" r="2" stroke="#fff" fill="none"/>
<line x1="447.5" y1="360.5" x2="454" y2="360.5" stroke="#f00"/>
<line x1="450.5" y1="357.5" x2="450.5" y2="364" stroke="#f00"/>
<circle cx="450.5" cy="408.5" r="2" stroke="#fff" fill="none"/>
<line x1="447.5" y1="408.5" x2="454" y2="408.5" stroke="#f00"/>
<line x1="450.5" y1="405.5" x2="450.5" y2="412" stroke="#f00"/>
<circle cx="481.5" cy="360.5" r="2" stroke="#fff" fill="none"/>
<line x1="478.5" y1="360.5" x2="485" y2="360.5" stroke="#f00"/>
<line x1="481.5" y1="357.5" x2="481.5" y2="364" stroke="#f00"/>
<circle cx="481.5" cy="408.5" r="2" stroke="#fff" fill="none"/>
<line x1="478.5" y1="408.5" x2="485" y2="408.5" stroke="#f00"/>
<line x1="481.5" y1="405.5" x2="481.5" y2="412" stroke="#f00"/>
<circle cx="459.5" cy="360.5" r="1.5" stroke="#fff" fill="none"/>
<line x1="457.5" y1="360.5" x2="462" y2="360.5" stroke="#f00"/>
<circle cx="459.5" cy="408.5" r="1.5" stroke="#fff" fill="none"/>
<line x1="457.5" y1="408.5" x2="462" y2="408.5" stroke="#f00"/>
<circle cx="472.5" cy="360.5" r="1.5" stroke="#fff" fill="none"/>
<line x1="470.5" y1="360.5" x2="475" y2="360.5" stroke="#f00"/>
<circle cx="472.5" cy="408.5" r="1.5" stroke="#fff" fill="none"/>
<line x1="470.5" y1="408.5" x2="475" y2="408.5" stroke="#f00"/>
<line x1="441" y1="373" x2="458" y2="373" stroke="#f0f" stroke-dasharray="2 1.5" stroke-width="2"/>
<line x1="441" y1="395.5" x2="458" y2="395.5" stroke="#f0f" stroke-dasharray="2 1.5" stroke-width="2"/>
<line x1="457.5" y1="373" x2="457.5" y2="396" stroke="#f0f" stroke-dasharray="2 1.5" stroke-width="2"/>
<line x1="441" y1="373" x2="441" y2="396" stroke="#f0f" stroke-dasharray="2 1.5"/>
<polyline points="442.5,373.5 456.5,381.5 456.5,388.5 442.5,396" stroke="#fff" fill="none"/>
<polyline points="450.5,366.5 450.5,370.5 455,370.5" stroke="#0f0" fill="none"/>
<polyline points="468,370.5 472.5,370.5 472.5,374.5" stroke="#0f0" fill="none"/>
<rect x="474.5" y="367.5" width="1" height="4" stroke="#f0f" fill="#f0f"/>
<rect x="479.5" y="374.5" width="9" height="22" stroke="#fff" fill="#000" rx="4.5"/>
<path d="M482.5 378 Q487 385 482.5 392.5" stroke="#fff" fill="none"/>
<rect x="488.5" y="381.5" width="7" height="7" stroke="#fff" fill="#000"/>
<rect x="495.5" y="378.5" width="12" height="12" stroke="#fff" fill="#000"/>
<rect x="507.5" y="349.5" width="13" height="71" stroke="#fff" fill="#000"/>
<line x1="507.5" y1="362.5" x2="520.5" y2="362.5" stroke="#fff"/>
<line x1="507.5" y1="406.5" x2="520.5" y2="406.5" stroke="#fff"/>
<circle cx="513.5" cy="355.5" r="4.5" stroke="#fff" fill="none"/>
<circle cx="513.5" cy="355.5" r="2.5" stroke="#fff" fill="none"/>
<line x1="508" y1="355.5" x2="519.5" y2="355.5" stroke="#f00"/>
<line x1="513.5" y1="349.5" x2="513.5" y2="362" stroke="#f00"/>
<circle cx="513.5" cy="412.5" r="4.5" stroke="#fff" fill="none"/>
<circle cx="513.5" cy="412.5" r="2.5" stroke="#fff" fill="none"/>
<line x1="508" y1="412.5" x2="519.5" y2="412.5" stroke="#f00"/>
<line x1="513.5" y1="406.5" x2="513.5" y2="419" stroke="#f00"/>
<rect x="520.5" y="379.5" width="13" height="10" stroke="#fff" fill="#000"/>
<line x1="520.5" y1="380.5" x2="533.5" y2="380.5" stroke="#fff"/>
<line x1="520.5" y1="388.5" x2="533.5" y2="388.5" stroke="#fff"/>
<rect x="533.5" y="375.5" width="6" height="19" stroke="#fff" fill="#000" rx="2"/>
<rect x="539.5" y="367.5" width="12" height="35" stroke="#fff" fill="#fff" rx="3"/>
<rect x="544" y="370" width="2" height="11" fill="url(#kn)"/>
<rect x="548" y="370" width="2" height="11" fill="url(#kn)"/>
<rect x="544" y="388" width="2" height="11" fill="url(#kn)"/>
<rect x="548" y="388" width="2" height="11" fill="url(#kn)"/>
<rect x="543" y="395" width="8" height="5" fill="url(#kn)"/>
<rect x="543" y="382" width="6" height="5" fill="#000"/>
<line x1="546.5" y1="365" x2="546.5" y2="404" stroke="#f00" stroke-dasharray="1 1"/>
<line x1="537.5" y1="381" x2="537.5" y2="389" stroke="#f00"/>
<line x1="141" y1="384.5" x2="549" y2="384.5" stroke="#f00" stroke-dasharray="62 3 3 3"/>
</g>
<g id="table">
<line x1="628.5" y1="364.5" x2="787.5" y2="364.5" stroke="#fff"/>
<line x1="628.5" y1="370.5" x2="787.5" y2="370.5" stroke="#fff"/>
<line x1="628.5" y1="376.5" x2="787.5" y2="376.5" stroke="#fff"/>
<line x1="628.5" y1="383.5" x2="787.5" y2="383.5" stroke="#fff"/>
<line x1="628.5" y1="389.5" x2="787.5" y2="389.5" stroke="#fff"/>
<line x1="628.5" y1="395.5" x2="787.5" y2="395.5" stroke="#fff"/>
<line x1="628.5" y1="401.5" x2="787.5" y2="401.5" stroke="#fff"/>
<line x1="628.5" y1="407.5" x2="787.5" y2="407.5" stroke="#fff"/>
<line x1="628.5" y1="413.5" x2="787.5" y2="413.5" stroke="#fff"/>
<line x1="628.5" y1="420.5" x2="787.5" y2="420.5" stroke="#fff"/>
<line x1="628.5" y1="426.5" x2="787.5" y2="426.5" stroke="#fff"/>
<line x1="628.5" y1="432.5" x2="787.5" y2="432.5" stroke="#fff"/>
<line x1="628.5" y1="438.5" x2="787.5" y2="438.5" stroke="#fff"/>
<line x1="628.5" y1="444.5" x2="787.5" y2="444.5" stroke="#fff"/>
<line x1="628.5" y1="450.5" x2="787.5" y2="450.5" stroke="#fff"/>
<line x1="628.5" y1="457.5" x2="787.5" y2="457.5" stroke="#fff"/>
<line x1="628.5" y1="463.5" x2="787.5" y2="463.5" stroke="#fff"/>
<line x1="628.5" y1="364.5" x2="628.5" y2="476.5" stroke="#fff"/>
<line x1="635.5" y1="364.5" x2="635.5" y2="476.5" stroke="#fff"/>
<line x1="670.5" y1="364.5" x2="670.5" y2="476.5" stroke="#fff"/>
<line x1="709.5" y1="364.5" x2="709.5" y2="476.5" stroke="#fff"/>
<line x1="716.5" y1="364.5" x2="716.5" y2="476.5" stroke="#fff"/>
<line x1="750.5" y1="364.5" x2="750.5" y2="476.5" stroke="#fff"/>
<line x1="758.5" y1="364.5" x2="758.5" y2="476.5" stroke="#fff"/>
<line x1="769.5" y1="364.5" x2="769.5" y2="476.5" stroke="#fff"/>
<line x1="787.5" y1="364.5" x2="787.5" y2="476.5" stroke="#fff"/>
<line x1="628.5" y1="476.5" x2="787.5" y2="476.5" stroke="#fff"/>
<text x="629.8" y="369.6" font-size="6.6" fill="#fff" font-weight="bold" textLength="4.4" lengthAdjust="spacingAndGlyphs" style="stroke:#fff;stroke-width:0.7">16</text>
<text x="672.5" y="369.6" font-size="6.2" fill="#fff" font-weight="bold" textLength="7.5" lengthAdjust="spacingAndGlyphs" style="stroke:#fff;stroke-width:0.75">压块</text>
<text x="711.5" y="369.6" font-size="6.6" fill="#fff" font-weight="bold" textLength="2.6" lengthAdjust="spacingAndGlyphs" style="stroke:#fff;stroke-width:0.7">1</text>
<text x="718.3" y="369.6" font-size="6.6" fill="#fff" font-weight="bold" textLength="6" lengthAdjust="spacingAndGlyphs" style="stroke:#fff;stroke-width:0.7">45</text>
<text x="629.8" y="375.6" font-size="6.6" fill="#fff" font-weight="bold" textLength="4.4" lengthAdjust="spacingAndGlyphs" style="stroke:#fff;stroke-width:0.7">15</text>
<text x="636.5" y="375.6" font-size="6.6" fill="#fff" font-weight="bold" textLength="29" lengthAdjust="spacingAndGlyphs" style="stroke:#fff;stroke-width:0.8">GB/T 70.1-2000</text>
<text x="672.5" y="375.6" font-size="6.2" fill="#fff" font-weight="bold" textLength="35" lengthAdjust="spacingAndGlyphs" style="stroke:#fff;stroke-width:0.75">内六角圆柱头螺钉M6×20</text>
<text x="711.5" y="375.6" font-size="6.6" fill="#fff" font-weight="bold" textLength="2.6" lengthAdjust="spacingAndGlyphs" style="stroke:#fff;stroke-width:0.7">2</text>
<text x="718.3" y="375.6" font-size="6.6" fill="#fff" font-weight="bold" textLength="6" lengthAdjust="spacingAndGlyphs" style="stroke:#fff;stroke-width:0.7">35</text>
<text x="629.8" y="382.6" font-size="6.6" fill="#fff" font-weight="bold" textLength="4.4" lengthAdjust="spacingAndGlyphs" style="stroke:#fff;stroke-width:0.7">14</text>
<text x="672.5" y="382.6" font-size="6.2" fill="#fff" font-weight="bold" textLength="23.5" lengthAdjust="spacingAndGlyphs" style="stroke:#fff;stroke-width:0.75">圆柱销 6×24</text>
<text x="711.5" y="382.6" font-size="6.6" fill="#fff" font-weight="bold" textLength="2.6" lengthAdjust="spacingAndGlyphs" style="stroke:#fff;stroke-width:0.7">2</text>
<text x="718.3" y="382.6" font-size="6.6" fill="#fff" font-weight="bold" textLength="6" lengthAdjust="spacingAndGlyphs" style="stroke:#fff;stroke-width:0.7">35</text>
<text x="629.8" y="388.6" font-size="6.6" fill="#fff" font-weight="bold" textLength="4.4" lengthAdjust="spacingAndGlyphs" style="stroke:#fff;stroke-width:0.7">13</text>
<text x="672.5" y="388.6" font-size="6.2" fill="#fff" font-weight="bold" textLength="6" lengthAdjust="spacingAndGlyphs" style="stroke:#fff;stroke-width:0.75">盖板</text>
<text x="711.5" y="388.6" font-size="6.6" fill="#fff" font-weight="bold" textLength="2.6" lengthAdjust="spacingAndGlyphs" style="stroke:#fff;stroke-width:0.7">1</text>
<text x="718.3" y="388.6" font-size="6.6" fill="#fff" font-weight="bold" textLength="6" lengthAdjust="spacingAndGlyphs" style="stroke:#fff;stroke-width:0.7">45</text>
<text x="629.8" y="394.6" font-size="6.6" fill="#fff" font-weight="bold" textLength="4.4" lengthAdjust="spacingAndGlyphs" style="stroke:#fff;stroke-width:0.7">12</text>
<text x="636.5" y="394.6" font-size="6.6" fill="#fff" font-weight="bold" textLength="29" lengthAdjust="spacingAndGlyphs" style="stroke:#fff;stroke-width:0.8">GB/T 70.1-2000</text>
<text x="672.5" y="394.6" font-size="6.2" fill="#fff" font-weight="bold" textLength="35" lengthAdjust="spacingAndGlyphs" style="stroke:#fff;stroke-width:0.75">内六角圆柱头螺钉M5×12</text>
<text x="711.5" y="394.6" font-size="6.6" fill="#fff" font-weight="bold" textLength="2.6" lengthAdjust="spacingAndGlyphs" style="stroke:#fff;stroke-width:0.7">4</text>
<text x="718.3" y="394.6" font-size="6.6" fill="#fff" font-weight="bold" textLength="6" lengthAdjust="spacingAndGlyphs" style="stroke:#fff;stroke-width:0.7">35</text>
<text x="629.8" y="400.6" font-size="6.6" fill="#fff" font-weight="bold" textLength="4.4" lengthAdjust="spacingAndGlyphs" style="stroke:#fff;stroke-width:0.7">11</text>
<text x="636.5" y="400.6" font-size="6.6" fill="#fff" font-weight="bold" textLength="29" lengthAdjust="spacingAndGlyphs" style="stroke:#fff;stroke-width:0.8">JB/T 8023.2</text>
<text x="672.5" y="400.6" font-size="6.2" fill="#fff" font-weight="bold" textLength="35" lengthAdjust="spacingAndGlyphs" style="stroke:#fff;stroke-width:0.75">滚花把手 M10×80</text>
<text x="711.5" y="400.6" font-size="6.6" fill="#fff" font-weight="bold" textLength="2.6" lengthAdjust="spacingAndGlyphs" style="stroke:#fff;stroke-width:0.7">1</text>
<text x="718.3" y="400.6" font-size="6.6" fill="#fff" font-weight="bold" textLength="8" lengthAdjust="spacingAndGlyphs" style="stroke:#fff;stroke-width:0.7">Q235</text>
<text x="629.8" y="406.6" font-size="6.6" fill="#fff" font-weight="bold" textLength="4.4" lengthAdjust="spacingAndGlyphs" style="stroke:#fff;stroke-width:0.7">10</text>
<text x="672.5" y="406.6" font-size="6.2" fill="#fff" font-weight="bold" textLength="14" lengthAdjust="spacingAndGlyphs" style="stroke:#fff;stroke-width:0.75">螺母座</text>
<text x="711.5" y="406.6" font-size="6.6" fill="#fff" font-weight="bold" textLength="2.6" lengthAdjust="spacingAndGlyphs" style="stroke:#fff;stroke-width:0.7">1</text>
<text x="718.3" y="406.6" font-size="6.6" fill="#fff" font-weight="bold" textLength="6" lengthAdjust="spacingAndGlyphs" style="stroke:#fff;stroke-width:0.7">45</text>
<text x="629.8" y="412.6" font-size="6.6" fill="#fff" font-weight="bold" textLength="4.4" lengthAdjust="spacingAndGlyphs" style="stroke:#fff;stroke-width:0.7">9</text>
<text x="636.5" y="412.6" font-size="6.6" fill="#fff" font-weight="bold" textLength="29" lengthAdjust="spacingAndGlyphs" style="stroke:#fff;stroke-width:0.8">GB/T 119.1</text>
<text x="672.5" y="412.6" font-size="6.2" fill="#fff" font-weight="bold" textLength="35" lengthAdjust="spacingAndGlyphs" style="stroke:#fff;stroke-width:0.75">圆柱销 8×30 m6</text>
<text x="711.5" y="412.6" font-size="6.6" fill="#fff" font-weight="bold" textLength="2.6" lengthAdjust="spacingAndGlyphs" style="stroke:#fff;stroke-width:0.7">2</text>
<text x="718.3" y="412.6" font-size="6.6" fill="#fff" font-weight="bold" textLength="6" lengthAdjust="spacingAndGlyphs" style="stroke:#fff;stroke-width:0.7">35</text>
<text x="629.8" y="419.6" font-size="6.6" fill="#fff" font-weight="bold" textLength="4.4" lengthAdjust="spacingAndGlyphs" style="stroke:#fff;stroke-width:0.7">8</text>
<text x="636.5" y="419.6" font-size="6.6" fill="#fff" font-weight="bold" textLength="29" lengthAdjust="spacingAndGlyphs" style="stroke:#fff;stroke-width:0.8">GB/T 70.1-2000</text>
<text x="672.5" y="419.6" font-size="6.2" fill="#fff" font-weight="bold" textLength="35" lengthAdjust="spacingAndGlyphs" style="stroke:#fff;stroke-width:0.75">内六角螺钉 M8×25</text>
<text x="711.5" y="419.6" font-size="6.6" fill="#fff" font-weight="bold" textLength="2.6" lengthAdjust="spacingAndGlyphs" style="stroke:#fff;stroke-width:0.7">4</text>
<text x="718.3" y="419.6" font-size="6.6" fill="#fff" font-weight="bold" textLength="6" lengthAdjust="spacingAndGlyphs" style="stroke:#fff;stroke-width:0.7">35</text>
<text x="629.8" y="425.6" font-size="6.6" fill="#fff" font-weight="bold" textLength="4.4" lengthAdjust="spacingAndGlyphs" style="stroke:#fff;stroke-width:0.7">7</text>
<text x="636.5" y="425.6" font-size="6.6" fill="#fff" font-weight="bold" textLength="29" lengthAdjust="spacingAndGlyphs" style="stroke:#fff;stroke-width:0.8">GB/T 2206</text>
<text x="672.5" y="425.6" font-size="6.2" fill="#fff" font-weight="bold" textLength="30" lengthAdjust="spacingAndGlyphs" style="stroke:#fff;stroke-width:0.75">定位键 A12h6</text>
<text x="711.5" y="425.6" font-size="6.6" fill="#fff" font-weight="bold" textLength="2.6" lengthAdjust="spacingAndGlyphs" style="stroke:#fff;stroke-width:0.7">2</text>
<text x="718.3" y="425.6" font-size="6.6" fill="#fff" font-weight="bold" textLength="6" lengthAdjust="spacingAndGlyphs" style="stroke:#fff;stroke-width:0.7">45</text>
<text x="629.8" y="431.6" font-size="6.6" fill="#fff" font-weight="bold" textLength="4.4" lengthAdjust="spacingAndGlyphs" style="stroke:#fff;stroke-width:0.7">6</text>
<text x="672.5" y="431.6" font-size="6.2" fill="#fff" font-weight="bold" textLength="10.5" lengthAdjust="spacingAndGlyphs" style="stroke:#fff;stroke-width:0.75">连杆</text>
<text x="711.5" y="431.6" font-size="6.6" fill="#fff" font-weight="bold" textLength="2.6" lengthAdjust="spacingAndGlyphs" style="stroke:#fff;stroke-width:0.7">1</text>
<text x="718.3" y="431.6" font-size="6.6" fill="#fff" font-weight="bold" textLength="11" lengthAdjust="spacingAndGlyphs" style="stroke:#fff;stroke-width:0.7">HT200</text>
<text x="629.8" y="437.6" font-size="6.6" fill="#fff" font-weight="bold" textLength="4.4" lengthAdjust="spacingAndGlyphs" style="stroke:#fff;stroke-width:0.7">5</text>
<text x="636.5" y="437.6" font-size="6.6" fill="#fff" font-weight="bold" textLength="29" lengthAdjust="spacingAndGlyphs" style="stroke:#fff;stroke-width:0.8">JB/T 8018.1</text>
<text x="672.5" y="437.6" font-size="6.2" fill="#fff" font-weight="bold" textLength="35" lengthAdjust="spacingAndGlyphs" style="stroke:#fff;stroke-width:0.75">固定V形块 24-A</text>
<text x="711.5" y="437.6" font-size="6.6" fill="#fff" font-weight="bold" textLength="2.6" lengthAdjust="spacingAndGlyphs" style="stroke:#fff;stroke-width:0.7">1</text>
<text x="718.3" y="437.6" font-size="6.6" fill="#fff" font-weight="bold" textLength="6" lengthAdjust="spacingAndGlyphs" style="stroke:#fff;stroke-width:0.7">20</text>
<text x="629.8" y="443.6" font-size="6.6" fill="#fff" font-weight="bold" textLength="4.4" lengthAdjust="spacingAndGlyphs" style="stroke:#fff;stroke-width:0.7">4</text>
<text x="672.5" y="443.6" font-size="6.2" fill="#fff" font-weight="bold" textLength="22.5" lengthAdjust="spacingAndGlyphs" style="stroke:#fff;stroke-width:0.75">圆柱销 6×30</text>
<text x="711.5" y="443.6" font-size="6.6" fill="#fff" font-weight="bold" textLength="2.6" lengthAdjust="spacingAndGlyphs" style="stroke:#fff;stroke-width:0.7">2</text>
<text x="718.3" y="443.6" font-size="6.6" fill="#fff" font-weight="bold" textLength="6" lengthAdjust="spacingAndGlyphs" style="stroke:#fff;stroke-width:0.7">35</text>
<text x="629.8" y="449.6" font-size="6.6" fill="#fff" font-weight="bold" textLength="4.4" lengthAdjust="spacingAndGlyphs" style="stroke:#fff;stroke-width:0.7">3</text>
<text x="636.5" y="449.6" font-size="6.6" fill="#fff" font-weight="bold" textLength="29" lengthAdjust="spacingAndGlyphs" style="stroke:#fff;stroke-width:0.8">GB/T 70.1-2000</text>
<text x="672.5" y="449.6" font-size="6.2" fill="#fff" font-weight="bold" textLength="35" lengthAdjust="spacingAndGlyphs" style="stroke:#fff;stroke-width:0.75">内六角圆柱头螺钉M6×16</text>
<text x="711.5" y="449.6" font-size="6.6" fill="#fff" font-weight="bold" textLength="2.6" lengthAdjust="spacingAndGlyphs" style="stroke:#fff;stroke-width:0.7">2</text>
<text x="718.3" y="449.6" font-size="6.6" fill="#fff" font-weight="bold" textLength="6" lengthAdjust="spacingAndGlyphs" style="stroke:#fff;stroke-width:0.7">35</text>
<text x="629.8" y="456.6" font-size="6.6" fill="#fff" font-weight="bold" textLength="4.4" lengthAdjust="spacingAndGlyphs" style="stroke:#fff;stroke-width:0.7">2</text>
<text x="672.5" y="456.6" font-size="6.2" fill="#fff" font-weight="bold" textLength="20" lengthAdjust="spacingAndGlyphs" style="stroke:#fff;stroke-width:0.75">挡销 A10</text>
<text x="711.5" y="456.6" font-size="6.6" fill="#fff" font-weight="bold" textLength="2.6" lengthAdjust="spacingAndGlyphs" style="stroke:#fff;stroke-width:0.7">1</text>
<text x="718.3" y="456.6" font-size="6.6" fill="#fff" font-weight="bold" textLength="6" lengthAdjust="spacingAndGlyphs" style="stroke:#fff;stroke-width:0.7">45</text>
<text x="629.8" y="462.6" font-size="6.6" fill="#fff" font-weight="bold" textLength="4.4" lengthAdjust="spacingAndGlyphs" style="stroke:#fff;stroke-width:0.7">1</text>
<text x="636.5" y="462.6" font-size="6.6" fill="#fff" font-weight="bold" textLength="29" lengthAdjust="spacingAndGlyphs" style="stroke:#fff;stroke-width:0.8">GB/T 70.1-2000</text>
<text x="672.5" y="462.6" font-size="6.2" fill="#fff" font-weight="bold" textLength="35" lengthAdjust="spacingAndGlyphs" style="stroke:#fff;stroke-width:0.75">内六角圆柱头螺钉M6×25</text>
<text x="711.5" y="462.6" font-size="6.6" fill="#fff" font-weight="bold" textLength="2.6" lengthAdjust="spacingAndGlyphs" style="stroke:#fff;stroke-width:0.7">1</text>
<text x="718.3" y="462.6" font-size="6.6" fill="#fff" font-weight="bold" textLength="6" lengthAdjust="spacingAndGlyphs" style="stroke:#fff;stroke-width:0.7">35</text>
<text x="629.5" y="473.5" font-size="9" fill="#fff" font-weight="bold" textLength="5" lengthAdjust="spacingAndGlyphs" style="stroke:#fff;stroke-width:0.6">序号</text>
<text x="647" y="473.5" font-size="9" fill="#fff" font-weight="bold" textLength="10" lengthAdjust="spacingAndGlyphs" style="stroke:#fff;stroke-width:0.6">代号</text>
<text x="684.5" y="473.5" font-size="9" fill="#fff" font-weight="bold" textLength="10" lengthAdjust="spacingAndGlyphs" style="stroke:#fff;stroke-width:0.6">名称</text>
<text x="710" y="473.5" font-size="9" fill="#fff" font-weight="bold" textLength="5.5" lengthAdjust="spacingAndGlyphs" style="stroke:#fff;stroke-width:0.6">数量</text>
<text x="727" y="473.5" font-size="9" fill="#fff" font-weight="bold" textLength="11.5" lengthAdjust="spacingAndGlyphs" style="stroke:#fff;stroke-width:0.6">材料</text>
<text x="751.5" y="469" font-size="4.2" fill="#fff" font-weight="bold" textLength="5.5" lengthAdjust="spacingAndGlyphs" style="stroke:#fff;stroke-width:0.3">单件</text>
<text x="761" y="469" font-size="4.2" fill="#fff" font-weight="bold" textLength="6" lengthAdjust="spacingAndGlyphs" style="stroke:#fff;stroke-width:0.3">总计</text>
<line x1="750.5" y1="470.5" x2="769.5" y2="470.5" stroke="#fff"/>
<rect x="758" y="471" width="1" height="5" fill="#000"/>
<text x="757.5" y="475.5" font-size="5" fill="#fff" font-weight="bold" textLength="5" lengthAdjust="spacingAndGlyphs" style="stroke:#fff;stroke-width:0.3">重量</text>
<text x="772.5" y="473.5" font-size="9" fill="#fff" font-weight="bold" textLength="11" lengthAdjust="spacingAndGlyphs" style="stroke:#fff;stroke-width:0.6">备注</text>
<line x1="628.5" y1="476.5" x2="628.5" y2="525.5" stroke="#fff"/>
<line x1="698.5" y1="476.5" x2="698.5" y2="525.5" stroke="#fff"/>
<line x1="742.5" y1="476.5" x2="742.5" y2="525.5" stroke="#fff"/>
<line x1="628.5" y1="482.5" x2="698.5" y2="482.5" stroke="#fff"/>
<line x1="628.5" y1="488.5" x2="698.5" y2="488.5" stroke="#fff"/>
<line x1="628.5" y1="494.5" x2="698.5" y2="494.5" stroke="#fff"/>
<line x1="628.5" y1="500.5" x2="698.5" y2="500.5" stroke="#fff"/>
<line x1="628.5" y1="507.5" x2="698.5" y2="507.5" stroke="#fff"/>
<line x1="628.5" y1="513.5" x2="698.5" y2="513.5" stroke="#fff"/>
<line x1="628.5" y1="519.5" x2="698.5" y2="519.5" stroke="#fff"/>
<line x1="636.5" y1="476.5" x2="636.5" y2="500.5" stroke="#fff"/>
<line x1="645.5" y1="476.5" x2="645.5" y2="500.5" stroke="#fff"/>
<line x1="659.5" y1="476.5" x2="659.5" y2="500.5" stroke="#fff"/>
<line x1="674.5" y1="476.5" x2="674.5" y2="500.5" stroke="#fff"/>
<line x1="684.5" y1="476.5" x2="684.5" y2="500.5" stroke="#fff"/>
<line x1="638.5" y1="500.5" x2="638.5" y2="525.5" stroke="#fff"/>
<line x1="649.5" y1="500.5" x2="649.5" y2="525.5" stroke="#fff"/>
<line x1="663.5" y1="500.5" x2="663.5" y2="525.5" stroke="#fff"/>
<line x1="674.5" y1="500.5" x2="674.5" y2="525.5" stroke="#fff"/>
<line x1="684.5" y1="500.5" x2="684.5" y2="525.5" stroke="#fff"/>
<line x1="698.5" y1="500.5" x2="742.5" y2="500.5" stroke="#fff"/>
<line x1="698.5" y1="509.5" x2="742.5" y2="509.5" stroke="#fff"/>
<line x1="698.5" y1="517.5" x2="742.5" y2="517.5" stroke="#fff"/>
<line x1="721.5" y1="500.5" x2="721.5" y2="517.5" stroke="#fff"/>
<line x1="732.5" y1="500.5" x2="732.5" y2="517.5" stroke="#fff"/>
<line x1="704.5" y1="509.5" x2="704.5" y2="517.5" stroke="#fff"/>
<line x1="709.5" y1="509.5" x2="709.5" y2="517.5" stroke="#fff"/>
<line x1="715.5" y1="509.5" x2="715.5" y2="517.5" stroke="#fff"/>
<line x1="742.5" y1="492.5" x2="787.5" y2="492.5" stroke="#fff"/>
<line x1="742.5" y1="509.5" x2="787.5" y2="509.5" stroke="#fff"/>
<text x="629.5" y="499.8" font-size="4.6" fill="#fff" font-weight="bold" textLength="6.3" lengthAdjust="spacingAndGlyphs" style="stroke:#fff;stroke-width:0.3">标记</text>
<text x="637.2" y="499.8" font-size="4.6" fill="#fff" font-weight="bold" textLength="6.4" lengthAdjust="spacingAndGlyphs" style="stroke:#fff;stroke-width:0.3">处数</text>
<text x="649.5" y="499.8" font-size="4.6" fill="#fff" font-weight="bold" textLength="7" lengthAdjust="spacingAndGlyphs" style="stroke:#fff;stroke-width:0.3">分区</text>
<text x="660.3" y="499.8" font-size="4.6" fill="#fff" font-weight="bold" textLength="8.2" lengthAdjust="spacingAndGlyphs" style="stroke:#fff;stroke-width:0.3">更改文件号</text>
<text x="676.4" y="499.8" font-size="4.6" fill="#fff" font-weight="bold" textLength="7.4" lengthAdjust="spacingAndGlyphs" style="stroke:#fff;stroke-width:0.3">签名</text>
<text x="686.2" y="499.8" font-size="4.6" fill="#fff" font-weight="bold" textLength="7" lengthAdjust="spacingAndGlyphs" style="stroke:#fff;stroke-width:0.3">年月日</text>
<text x="629.5" y="506.3" font-size="4.6" fill="#fff" font-weight="bold" textLength="8.2" lengthAdjust="spacingAndGlyphs" style="stroke:#fff;stroke-width:0.3">设计</text>
<text x="664.2" y="506.3" font-size="4.6" fill="#fff" font-weight="bold" textLength="8.8" lengthAdjust="spacingAndGlyphs" style="stroke:#fff;stroke-width:0.3">标准化</text>
<text x="629.5" y="519" font-size="4.6" fill="#fff" font-weight="bold" textLength="8.5" lengthAdjust="spacingAndGlyphs" style="stroke:#fff;stroke-width:0.3">审核</text>
<text x="629.5" y="525" font-size="4.6" fill="#fff" font-weight="bold" textLength="8.5" lengthAdjust="spacingAndGlyphs" style="stroke:#fff;stroke-width:0.3">工艺</text>
<text x="665.2" y="525" font-size="4.6" fill="#fff" font-weight="bold" textLength="7.8" lengthAdjust="spacingAndGlyphs" style="stroke:#fff;stroke-width:0.3">批准</text>
<text x="701" y="508" font-size="5.5" fill="#fff" font-weight="bold" textLength="17" lengthAdjust="spacingAndGlyphs" style="stroke:#fff;stroke-width:0.3">阶段标记</text>
<text x="723" y="508" font-size="5.5" fill="#fff" font-weight="bold" textLength="8" lengthAdjust="spacingAndGlyphs" style="stroke:#fff;stroke-width:0.3">重量</text>
<text x="733.2" y="508" font-size="5.5" fill="#fff" font-weight="bold" textLength="7.8" lengthAdjust="spacingAndGlyphs" style="stroke:#fff;stroke-width:0.3">比例</text>
<text x="735.2" y="515" font-size="5" fill="#fff" font-weight="bold" textLength="4" lengthAdjust="spacingAndGlyphs" style="stroke:#fff;stroke-width:0.3">1:1</text>
<text x="703" y="524.3" font-size="5" fill="#fff" font-weight="bold" textLength="3.4" lengthAdjust="spacingAndGlyphs" style="stroke:#fff;stroke-width:0.3">共</text>
<text x="713.6" y="524.3" font-size="5" fill="#fff" font-weight="bold" textLength="3.6" lengthAdjust="spacingAndGlyphs" style="stroke:#fff;stroke-width:0.3">张</text>
<text x="721" y="524.3" font-size="5" fill="#fff" font-weight="bold" textLength="3" lengthAdjust="spacingAndGlyphs" style="stroke:#fff;stroke-width:0.3">第</text>
<text x="731.9" y="524.3" font-size="5" fill="#fff" font-weight="bold" textLength="3" lengthAdjust="spacingAndGlyphs" style="stroke:#fff;stroke-width:0.3">张</text>
</g>
</svg></body></html>
